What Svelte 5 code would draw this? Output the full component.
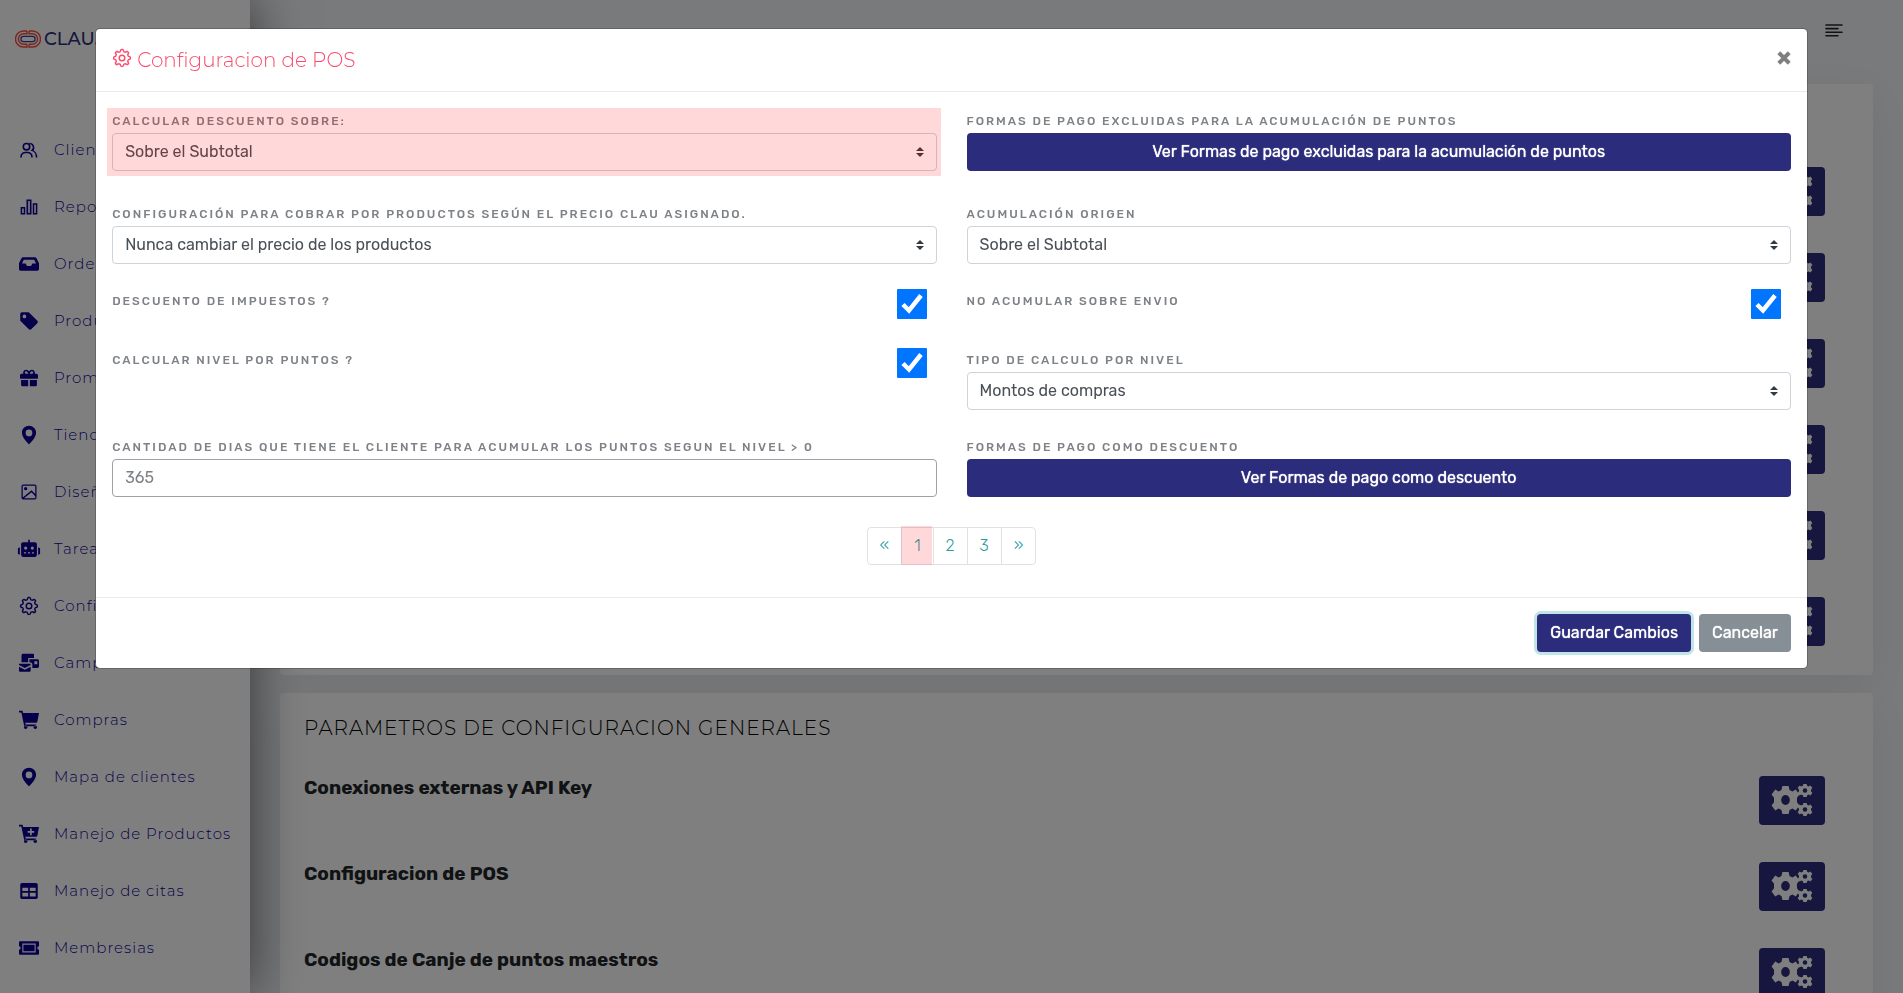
<script>
	const menu = [
		{ label: 'Clientes', icon: 'users' },
		{ label: 'Reportes', icon: 'bars' },
		{ label: 'Ordenes', icon: 'inbox' },
		{ label: 'Productos', icon: 'tag' },
		{ label: 'Promociones', icon: 'gift' },
		{ label: 'Tiendas', icon: 'pin' },
		{ label: 'Diseño', icon: 'image' },
		{ label: 'Tareas', icon: 'robot' },
		{ label: 'Configuracion', icon: 'gear' },
		{ label: 'Campañas', icon: 'mail' },
		{ label: 'Compras', icon: 'cart' },
		{ label: 'Mapa de clientes', icon: 'pin' },
		{ label: 'Manejo de Productos', icon: 'cartAdd' },
		{ label: 'Manejo de citas', icon: 'table' },
		{ label: 'Membresias', icon: 'ticket' }
	];

	// 24x24 icons, filled with evenodd
	const icons = {
		users: 'M17.600 12.500a5.700 5.700 0 0 0 .8-4C18.200 5.500 16 3.300 13 3.200l-.8.1 1 1.700c1.900.3 3.200 1.800 3.300 3.600 0 1.300-.5 2.400-1.500 3.200l-1.200 1 1.600.5c4.600 1.400 4.700 5.700 4.700 7.700h2c0-2.500-1-6.500-4.500-8.500zM9 3.200a4.800 4.800 0 1 0 0 9.600 4.800 4.800 0 0 0 0-9.600zm0 1.900a2.900 2.900 0 1 1 0 5.800 2.900 2.900 0 0 1 0-5.800zM7.500 14h3a6 6 0 0 1 6 6v1h-1.900v-1c0-2.300-1.800-4.100-4.100-4.100h-3c-2.300 0-4.100 1.800-4.100 4.100v1H1.500v-1a6 6 0 0 1 6-6z',
		bars: 'M9 3v18h6V3H9zm4 16.200h-2V4.800h2zM2 12v9h5.500v-9zm3.700 7.200H3.800v-5.400h1.900zM16.500 7.500V21H22V7.500zm3.700 11.700h-1.900V9.300h1.900z',
		inbox: 'M5 4h14c1 0 1.700.5 2.200 1.300L24 11v7c0 1.400-.9 2-2 2H2c-1.300 0-2-.8-2-2v-7l2.800-5.700C3.300 4.400 4 4 5 4zm.8 3L3.500 11.500H8l1.500 3h5l1.500-3h4.500L18.200 7z',
		tag: 'M1.500 3.500c0-1.100.9-2 2-2h8.200L22 11.800c.8.8.8 2 0 2.800L14.600 22c-.8.8-2 .8-2.800 0L1.500 11.700zM6.500 4.300a2.200 2.200 0 1 0 0 4.400 2.200 2.200 0 0 0 0-4.400z',
		gift: 'M20 7h-1.200c.2-.5.2-1 .2-1.500C19 3.600 17.400 2 15.500 2c-1.600 0-2.700.9-3.500 1.900C11.200 2.900 10.100 2 8.500 2 6.600 2 5 3.600 5 5.500c0 .5 0 1 .2 1.500H3c-1.100 0-1.800.9-1.800 2v3c0 .6.400 1 1 1h19.600c.6 0 1-.4 1-1V9c0-1.100-.9-2-2-2zM8.500 4c1.200 0 2.200 1.700 2.700 3H8.500a1.500 1.500 0 0 1 0-3zm7 3h-2.700c.5-1.300 1.500-3 2.700-3a1.500 1.500 0 0 1 0 3zM2.500 14.500V20c0 1.100.9 2 2 2H11v-7.500zM13 22h6.500c1.100 0 2-.9 2-2v-5.500H13z',
		pin: 'M12 1c-4.700 0-8.500 3.700-8.500 8.400 0 6 8.500 14 8.500 14s8.500-8 8.500-14C20.500 4.700 16.700 1 12 1zm0 4.500a4 4 0 1 1 0 8 4 4 0 0 1 0-8z',
		image: 'M5 3h14a2 2 0 0 1 2 2v14a2 2 0 0 1-2 2H5a2 2 0 0 1-2-2V5c0-1.100.9-2 2-2zm-.5 1.500v14L15 10l4.500 4.500v-10h-15zM6 19.500h13.500V17L15 12.200zM8 6a2 2 0 1 1 0 4 2 2 0 0 1 0-4z',
		robot: 'M11 1h2v3h6c1.400 0 2.500 1.100 2.500 2.500V19c0 1.400-1.100 2.500-2.500 2.500H5A2.500 2.500 0 0 1 2.500 19V6.500C2.500 5 3.600 4 5 4h6zM8 9a1.900 1.900 0 1 0 0 3.800A1.900 1.900 0 0 0 8 9zm8 0a1.900 1.900 0 1 0 0 3.800A1.900 1.900 0 0 0 16 9zM6 16v1.500h2.500V16zm4.700 0v1.500h2.600V16zm4.800 0v1.500H18V16zM-1.300 11l2.300-1v9l-2.300-1zM25.300 11 23 10v9l2.300-1z',
		gear: 'M12 7.800a4.200 4.200 0 1 0 0 8.400 4.200 4.200 0 0 0 0-8.400zm0 1.700a2.500 2.500 0 1 1 0 5 2.500 2.500 0 0 1 0-5zM9.800 2c.4-1.300 4-1.300 4.400 0l.6 1.800 1 .4 1.800-.9c1.300-.6 3.700 1.800 3.100 3.100l-.9 1.800.4 1 1.800.6c1.300.4 1.300 4 0 4.400l-1.800.6-.4 1 .9 1.800c.6 1.300-1.800 3.700-3.100 3.100l-1.800-.9-1 .4-.6 1.800c-.4 1.300-4 1.300-4.400 0l-.6-1.800-1-.4-1.800.9c-1.300.6-3.700-1.800-3.100-3.100l.9-1.800-.4-1L2 14.200c-1.300-.4-1.300-4 0-4.400l1.800-.6.4-1-.9-1.800C2.700 5.100 5.100 2.700 6.400 3.300l1.800.9 1-.4zm1.500.8L10.500 5 8 6.100 5.700 5 5 5.700 6.100 8 5 10.500l-2.200.8v1.400l2.200.8L6.100 16 5 18.300l.7.700L8 17.900l2.500 1.100.8 2.200h1.400l.8-2.200 2.500-1.100 2.300 1.100.7-.7-1.100-2.300 1.100-2.500 2.200-.8v-1.400l-2.200-.8L17.900 8 19 5.700l-.7-.7L16 6.100 13.500 5l-.8-2.200z',
		mail: 'M5 1h11.500c1 0 1.500.5 1.500 1.500V6h-7v5H3V3c0-1.200.8-2 2-2zm7.500 6.500H22c1.300 0 2 .8 2 2V16c0 1.200-.7 2-2 2h-6v-4.500c0-1.500-1-2.500-3.500-2.500zM18.500 10v3.500H22V10zM0 13h14v1.500L7 18l-7-3.500zm0 3.500L7 20l7-3.500V21c0 1-.7 1.500-1.500 1.500h-11C.6 22.500 0 22 0 21z',
		cart: 'M0 1h4.200l.8 2.500h19l-2 10.700c-.2.800-.7 1.200-1.500 1.200H7.600l.4 2.100h12.500v2H6.300L2.800 3H0zM8 18.500a2.200 2.200 0 1 1 0 4.400 2.200 2.200 0 0 1 0-4.400zm11.500 0a2.200 2.200 0 1 1 0 4.400 2.200 2.200 0 0 1 0-4.400z',
		cartAdd: 'M0 1h4.200l.8 2.500h19l-2 10.700c-.2.800-.7 1.200-1.500 1.200H7.600l.4 2.100h12.500v2H6.300L2.800 3H0zM8 18.500a2.200 2.200 0 1 1 0 4.400 2.200 2.200 0 0 1 0-4.400zm11.500 0a2.200 2.200 0 1 1 0 4.400 2.200 2.200 0 0 1 0-4.400zM13.300 5.500v3h-3v2h3v3h2v-3h3v-2h-3v-3z',
		table: 'M3.500 2.500h17c1.100 0 2 .9 2 2v15c0 1.100-.9 2-2 2h-17c-1.100 0-2-.9-2-2v-15c0-1.100.9-2 2-2zM4 8v4h7V8zm9 0v4h7V8zm-9 6v4.500h7V14zm9 0v4.500h7V14z',
		ticket: 'M1.500 4h21c.9 0 1.500.6 1.500 1.500V10a2 2 0 0 0 0 4v4.500c0 .9-.6 1.500-1.500 1.500h-21C.6 20 0 19.400 0 18.500V14a2 2 0 0 0 0-4V5.500C0 4.600.6 4 1.500 4zM4 6.500v11h16v-11zM5.300 8h13.400v8H5.300z'
	};

	const cog = 'M-2-8h4l.6 2.300 1.900.8L6.600-6 9-3.200 7.400-1.300v2.600L9 3.200 6.600 6l-2.100-1.100-1.900.8L2 8h-4l-.6-2.300-1.900-.8L-6.600 6-9 3.200l1.600-1.900v-2.600L-9-3.200-6.600-6l2.100 1.100 1.900-.8zM0-2.800a2.800 2.800 0 1 0 0 5.600 2.800 2.800 0 0 0 0-5.600z';

	const generales = ['Conexiones externas y API Key', 'Configuracion de POS', 'Codigos de Canje de puntos maestros'];

	let impuestos = true;
	let envio = true;
	let nivel = true;
	let page = 1;
</script>

{#snippet icon(name)}
	<svg class="icon" viewBox="0 0 24 24" aria-hidden="true"><path fill-rule="evenodd" d={icons[name]} /></svg>
{/snippet}

{#snippet cogs()}
	<button class="btn btn-cogs" aria-label="Configurar">
		<svg viewBox="0 0 42 33" aria-hidden="true">
			<path transform="translate(14.500 16) scale(1.550 1.750)" fill-rule="evenodd" d={cog} />
			<path transform="translate(34 6.500) scale(.82)" fill-rule="evenodd" d={cog} />
			<path transform="translate(34 25.500) scale(.82)" fill-rule="evenodd" d={cog} />
		</svg>
	</button>
{/snippet}

<div class="page">
	<aside>
		<a class="logo" href="#inicio">
			<svg viewBox="0 0 26 18" aria-hidden="true">
				<g fill="none" stroke="#fb4a3a" stroke-width="1.400">
					<path d="M12 1H8.500a8 8 0 0 0 0 16H12V14.300M14 1h3.500a8 8 0 0 1 0 16H14V14.300" />
					<path d="M12 1v2.700H8.700a5.300 5.300 0 0 0 0 10.600H12M14 1v2.700h3.300a5.300 5.300 0 0 1 0 10.600H14" />
				</g>
				<path d="M17.500 6.400h-9a2.600 2.600 0 0 0 0 5.200h9a2.600 2.600 0 0 0 0-5.200z" fill="none" stroke="#3c3c9c" stroke-width="1.200" />
			</svg>
			<span>CLAU<b>.</b></span>
		</a>
		<nav>
			{#each menu as item}
				<a href="#menu">{@render icon(item.icon)}<span>{item.label}</span></a>
			{/each}
		</nav>
	</aside>

	<main>
		<header class="topbar">
			<button class="toggle" aria-label="Menu">
				<svg viewBox="0 0 18 13" aria-hidden="true"><path d="M1 1h16M1 4.600h12M1 8.200h16M1 11.800h12" /></svg>
			</button>
		</header>
		<section class="card">
			<h2></h2>
			{#each Array(6) as _}
				<div class="param"><h3></h3>{@render cogs()}</div>
			{/each}
		</section>
		<section class="card">
			<h2>PARAMETROS DE CONFIGURACION GENERALES</h2>
			{#each generales as titulo}
				<div class="param"><h3>{titulo}</h3>{@render cogs()}</div>
			{/each}
		</section>
	</main>
</div>

<div class="backdrop">
	<div class="modal" role="dialog" aria-labelledby="modal-title">
		<div class="modal-header">
			<h1 id="modal-title">{@render icon('gear')} Configuracion de POS</h1>
			<button class="close" aria-label="Cerrar">
				<svg viewBox="0 0 12 12" aria-hidden="true"><path d="M1.500 1.500l9 9M10.500 1.500l-9 9" /></svg>
			</button>
		</div>

		<div class="modal-body">
			<div class="row first">
				<div class="field marked">
					<label for="descuento">CALCULAR DESCUENTO SOBRE:</label>
					<select id="descuento"><option>Sobre el Subtotal</option></select>
				</div>
				<div class="field">
					<label for="excluidas">FORMAS DE PAGO EXCLUIDAS PARA LA ACUMULACIÓN DE PUNTOS</label>
					<button id="excluidas" class="btn">Ver Formas de pago excluidas para la acumulación de puntos</button>
				</div>
			</div>
			<div class="row">
				<div class="field">
					<label for="cobrar">CONFIGURACIÓN PARA COBRAR POR PRODUCTOS SEGÚN EL PRECIO CLAU ASIGNADO.</label>
					<select id="cobrar"><option>Nunca cambiar el precio de los productos</option></select>
				</div>
				<div class="field">
					<label for="origen">ACUMULACIÓN ORIGEN</label>
					<select id="origen"><option>Sobre el Subtotal</option></select>
				</div>
			</div>
			<div class="row">
				<div class="check">
					<label for="impuestos">DESCUENTO DE IMPUESTOS ?</label>
					<input id="impuestos" type="checkbox" bind:checked={impuestos} />
				</div>
				<div class="check">
					<label for="envio">NO ACUMULAR SOBRE ENVIO</label>
					<input id="envio" type="checkbox" bind:checked={envio} />
				</div>
			</div>
			<div class="row">
				<div class="check">
					<label for="nivel">CALCULAR NIVEL POR PUNTOS ?</label>
					<input id="nivel" type="checkbox" bind:checked={nivel} />
				</div>
				<div class="field">
					<label for="calculo">TIPO DE CALCULO POR NIVEL</label>
					<select id="calculo"><option>Montos de compras</option></select>
				</div>
			</div>
			<div class="row">
				<div class="field">
					<label for="dias">CANTIDAD DE DIAS QUE TIENE EL CLIENTE PARA ACUMULAR LOS PUNTOS SEGUN EL NIVEL &gt; 0</label>
					<input id="dias" type="text" placeholder="365" />
				</div>
				<div class="field">
					<label for="formas">FORMAS DE PAGO COMO DESCUENTO</label>
					<button id="formas" class="btn">Ver Formas de pago como descuento</button>
				</div>
			</div>

			<nav class="pagination" aria-label="Paginas">
				<button>«</button>
				{#each [1, 2, 3] as n}
					<button class:marked={n === page} on:click={() => (page = n)}>{n}</button>
				{/each}
				<button>»</button>
			</nav>
		</div>

		<div class="modal-footer">
			<button class="btn focus">Guardar Cambios</button>
			<button class="btn btn-secondary">Cancelar</button>
		</div>
	</div>
</div>

<style>
	:global(body) {
		background: #f2f4f8;
		font-family: Rubik, Roboto, 'Liberation Sans', sans-serif;
		font-size: 16px;
		overflow: hidden;
	}

	* {
		box-sizing: border-box;
	}

	button,
	input,
	select {
		font: inherit;
	}

	.page {
		display: flex;
		height: 100vh;
		overflow: hidden;
	}

	.icon {
		width: 20px;
		height: 20px;
		fill: currentColor;
		overflow: visible;
	}

	aside {
		flex: 0 0 250px;
		background: #fff;
		box-shadow: 0 0 50px rgba(0, 0, 0, 0.6);
		z-index: 1;
	}

	.logo {
		display: flex;
		align-items: center;
		gap: 3px;
		height: 78px;
		padding-left: 15px;
		color: #2c2c7c;
		font: 500 18px Montserrat, Lato, sans-serif;
		text-decoration: none;
	}

	.logo svg {
		width: 26px;
		height: 18px;
	}

	.logo b {
		color: #fb3a3a;
	}

	aside nav {
		padding-top: 43px;
	}

	aside nav a {
		display: flex;
		align-items: center;
		gap: 15px;
		height: 57px;
		padding-left: 19px;
		color: #0c0094;
		font: 300 15px Montserrat, 'Open Sans', sans-serif;
		letter-spacing: 1px;
		text-decoration: none;
	}

	main {
		flex: 1;
		padding: 0 30px;
	}

	.topbar {
		display: flex;
		justify-content: flex-end;
		height: 84px;
		padding: 22px 30px 0 0;
	}

	.toggle {
		height: 16px;
		padding: 0;
		border: 0;
		background: none;
	}

	.toggle svg {
		width: 18px;
		height: 13px;
		fill: none;
		stroke: #212529;
		stroke-width: 1.6;
		stroke-linecap: round;
	}

	.card {
		margin-bottom: 18px;
		padding: 24px 48px 29px 24px;
		border-radius: 4px;
		background: #fff;
		box-shadow: 0 10px 40px rgba(0, 0, 0, 0.06);
	}

	h2 {
		height: 22px;
		margin: 0 0 37px;
		color: #000;
		font: 300 20px/22px Montserrat, 'Open Sans', sans-serif;
		letter-spacing: 1px;
	}

	.param {
		display: flex;
		justify-content: space-between;
		height: 49px;
	}

	.param + .param {
		margin-top: 37px;
	}

	h3 {
		margin: 0;
		color: #212529;
		font-size: 19px;
		font-weight: 700;
		line-height: 23px;
	}

	.btn {
		height: 38px;
		padding: 0 13px 2px;
		border: 0;
		border-radius: 4px;
		background: #2c2c7c;
		color: #fff;
		font-weight: 400;
		text-shadow: 0 0 1px #fff;
	}

	.btn-cogs {
		width: 66px;
		height: 49px;
		padding: 0 12px;
		fill: #fff;
	}

	.btn-cogs svg {
		display: block;
		width: 42px;
		height: 33px;
	}

	.backdrop {
		position: fixed;
		inset: 0;
		z-index: 2;
		padding-top: 28px;
		background: rgba(0, 0, 0, 0.5);
	}

	.modal {
		width: 90%;
		margin: 0 auto;
		border: 1px solid rgba(0, 0, 0, 0.2);
		border-radius: 5px;
		background: #fff;
		background-clip: padding-box;
	}

	.modal-header {
		display: flex;
		justify-content: space-between;
		height: 63px;
		padding: 16px;
		border-bottom: 1px solid #e9ecef;
	}

	h1 {
		margin: 0;
		color: #fc4b6c;
		font: 300 20px/30px Montserrat, 'Open Sans', sans-serif;
	}

	h1 .icon {
		vertical-align: -1px;
	}

	.close {
		align-self: flex-start;
		height: 26px;
		padding: 0;
		border: 0;
		background: none;
	}

	.close svg {
		display: block;
		width: 14px;
		height: 14px;
		stroke: #7f7f7f;
		stroke-width: 3.4;
	}

	.modal-body {
		padding: 16px;
	}

	.row {
		display: grid;
		grid-template-columns: 1fr 1fr;
		gap: 30px;
		margin-bottom: 24px;
	}

	.row.first {
		padding-bottom: 6px;
	}

	.field {
		display: flex;
		flex-direction: column;
		position: relative;
	}

	.check {
		display: flex;
		justify-content: space-between;
		min-height: 35px;
		padding-right: 10px;
	}

	label {
		padding-top: 2px;
		color: #7e8287;
		font-size: 12px;
		font-weight: 500;
		letter-spacing: 2px;
		line-height: 23px;
	}

	select,
	input[type='text'] {
		width: 100%;
		height: 38px;
		padding: 0 12px 2px;
		border: 1px solid #ced4da;
		border-radius: 4px;
		background: #fff;
		color: #495057;
	}

	select {
		appearance: none;
		background: #fff
			url("data:image/svg+xml,%3Csvg xmlns='http://www.w3.org/2000/svg' viewBox='0 0 4 5'%3E%3Cpath fill='%23343a40' d='M2 0L0 2h4zm0 5L0 3h4z'/%3E%3C/svg%3E")
			no-repeat right 12px center / 8px 10px;
	}

	input[type='text'] {
		border-color: #a0a0a8;
	}

	input::placeholder {
		color: #7e8287;
		opacity: 1;
	}

	input[type='checkbox'] {
		width: 30px;
		height: 30px;
		margin: 1px 0 0;
		appearance: none;
		border-radius: 1px;
		background: #0075ff;
	}

	input[type='checkbox']:checked {
		background-image: url("data:image/svg+xml,%3Csvg xmlns='http://www.w3.org/2000/svg' viewBox='0 0 30 30'%3E%3Cpath fill='none' stroke='%23fff' stroke-width='4.500' d='M6 15.500l6 6L24 6.500'/%3E%3C/svg%3E");
	}

	.marked::after {
		content: '';
		position: absolute;
		inset: 0 -4px -5px -5px;
		background: rgba(255, 0, 0, 0.15);
		pointer-events: none;
	}

	.pagination {
		display: flex;
		justify-content: center;
		padding: 6px 0 16px;
	}

	.pagination button {
		position: relative;
		height: 38px;
		margin-left: -1px;
		padding: 0 12px 2px;
		border: 1px solid #dee2e6;
		background: #fff;
		color: #2a9d9f;
		font-weight: 300;
	}

	.pagination button:first-child {
		margin-left: 0;
		border-radius: 4px 0 0 4px;
	}

	.pagination button:last-child {
		border-radius: 0 4px 4px 0;
	}

	.pagination .marked::after {
		inset: -2px 1px -1px -1px;
	}

	.modal-footer {
		display: flex;
		justify-content: flex-end;
		gap: 8px;
		padding: 16px;
		border-top: 1px solid #e9ecef;
	}

	.focus {
		box-shadow: 0 0 0 3px #bfe5e8;
	}

	.btn-secondary {
		background: #868e96;
	}
</style>
